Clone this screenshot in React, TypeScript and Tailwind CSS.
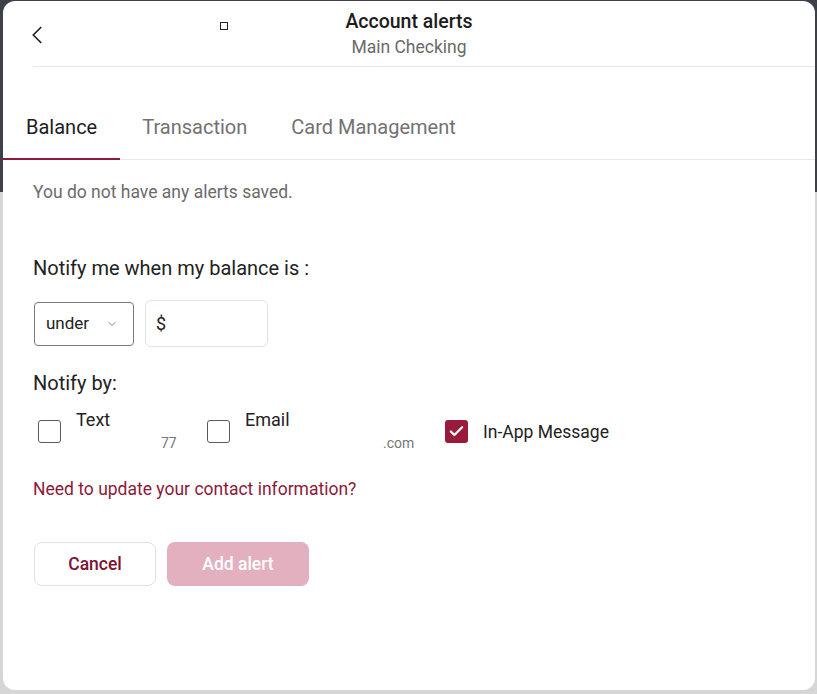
import React, { useState } from 'react';
import { ChevronLeft, ChevronDown, Check } from 'lucide-react';

const tabs = ['Balance', 'Transaction', 'Card Management'];

const Box = ({ checked }: { checked?: boolean }) =>
  checked ? (
    <span className="flex h-[23px] w-[23px] shrink-0 items-center justify-center rounded-[3px] bg-[#9a1a3c]">
      <Check size={17} strokeWidth={3.2} className="text-white" />
    </span>
  ) : (
    <span className="block h-[23px] w-[23px] shrink-0 rounded-[3px] border border-[#5a5a5a] bg-white" />
  );

export default function App() {
  const [active] = useState(0);

  return (
    <div
      className="h-[694px] w-[817px] overflow-hidden bg-[linear-gradient(to_bottom,#3d4147_0px,#3d4147_192px,#d6d6d6_192px)] pl-[3px] pt-[1px]"
      style={{ fontFamily: 'Roboto, "Liberation Sans", sans-serif' }}
    >
      <div className="flex h-[689px] w-[812px] flex-col rounded-[12px] bg-white">
        {/* header */}
        <div className="relative ml-[30px] flex h-[66px] flex-col items-center border-b border-[#e6e6e6] pr-[30px]">
          <button className="absolute left-[-11px] top-[19px] text-[#222]">
            <ChevronLeft size={30} strokeWidth={1.4} />
          </button>
          <span className="absolute left-[187px] top-[21px] h-[8px] w-[8px] border border-[#222]" />
          <div className="mt-[8px] text-[19.5px] font-medium leading-[26px] text-[#1c1c1c]">Account alerts</div>
          <div className="mt-[1px] text-[17.5px] leading-[22px] text-[#6a6a6a]">Main Checking</div>
        </div>

        {/* tabs */}
        <div className="mt-[44px] flex border-b border-[#e6e6e6]">
          {tabs.map((t, i) => (
            <div
              key={t}
              className={
                i === active
                  ? 'mb-[-1px] border-b-2 border-[#8c1a3a] px-[23px] pb-[19px] pt-[4px] text-[20px] leading-[24px] text-[#1c1c1c]'
                  : 'px-[22px] pb-[19px] pt-[4px] text-[20px] leading-[24px] text-[#727272]'
              }
            >
              {t}
            </div>
          ))}
        </div>

        {/* body */}
        <div className="flex flex-col px-[30px]">
          <p className="mt-[21px] text-[17.5px] leading-[22px] text-[#6b6b6b]">You do not have any alerts saved.</p>

          <p className="mt-[53px] text-[20px] leading-[24px] text-[#222]">Notify me when my balance is :</p>

          <div className="mt-[20px] flex items-center gap-[11px]">
            <div className="ml-[1px] flex h-[44px] w-[100px] items-center justify-between rounded-[4px] border border-[#7a7a7a] pl-[11px] pr-[15px] text-[17px] text-[#222]">
              <span>under</span>
              <ChevronDown size={12} strokeWidth={1.5} className="text-[#555]" />
            </div>
            <div className="flex h-[47px] w-[123px] items-center rounded-[6px] border border-[#e2e2e2] pl-[10px] text-[18px] text-[#222]">
              $
            </div>
          </div>

          <p className="mt-[24px] text-[20px] leading-[24px] text-[#222]">Notify by:</p>

          <div className="mt-[15px] flex items-start">
            <div className="ml-[5px] mt-[10px]">
              <Box />
            </div>
            <div className="ml-[15px] flex w-[102px] flex-col">
              <span className="text-[18px] leading-[20px] text-[#222]">Text</span>
              <span className="ml-[85px] mt-[4px] text-[14px] leading-[18px] text-[#777]">77</span>
            </div>
            <div className="ml-[29px] mt-[10px]">
              <Box />
            </div>
            <div className="ml-[15px] flex w-[170px] flex-col">
              <span className="text-[18px] leading-[20px] text-[#222]">Email</span>
              <span className="ml-[138px] mt-[4px] text-[14px] leading-[18px] text-[#777]">.com</span>
            </div>
            <div className="ml-[30px] mt-[10px] flex items-center gap-[15px]">
              <Box checked />
              <span className="text-[17.5px] leading-[20px] text-[#222]">In-App Message</span>
            </div>
          </div>

          <a className="mt-[26px] text-[17.5px] leading-[22px] text-[#8a1a3a]">Need to update your contact information?</a>

          <div className="mt-[42px] flex gap-[11px]">
            <button className="ml-[1px] h-[44px] w-[122px] rounded-[8px] border border-[#e2e2e2] bg-white text-[17.5px] font-medium text-[#7c1233]">
              Cancel
            </button>
            <button className="h-[44px] w-[142px] rounded-[8px] bg-[#e2b0bf] text-[17.5px] font-medium text-white">
              Add alert
            </button>
          </div>
        </div>
      </div>
    </div>
  );
}
